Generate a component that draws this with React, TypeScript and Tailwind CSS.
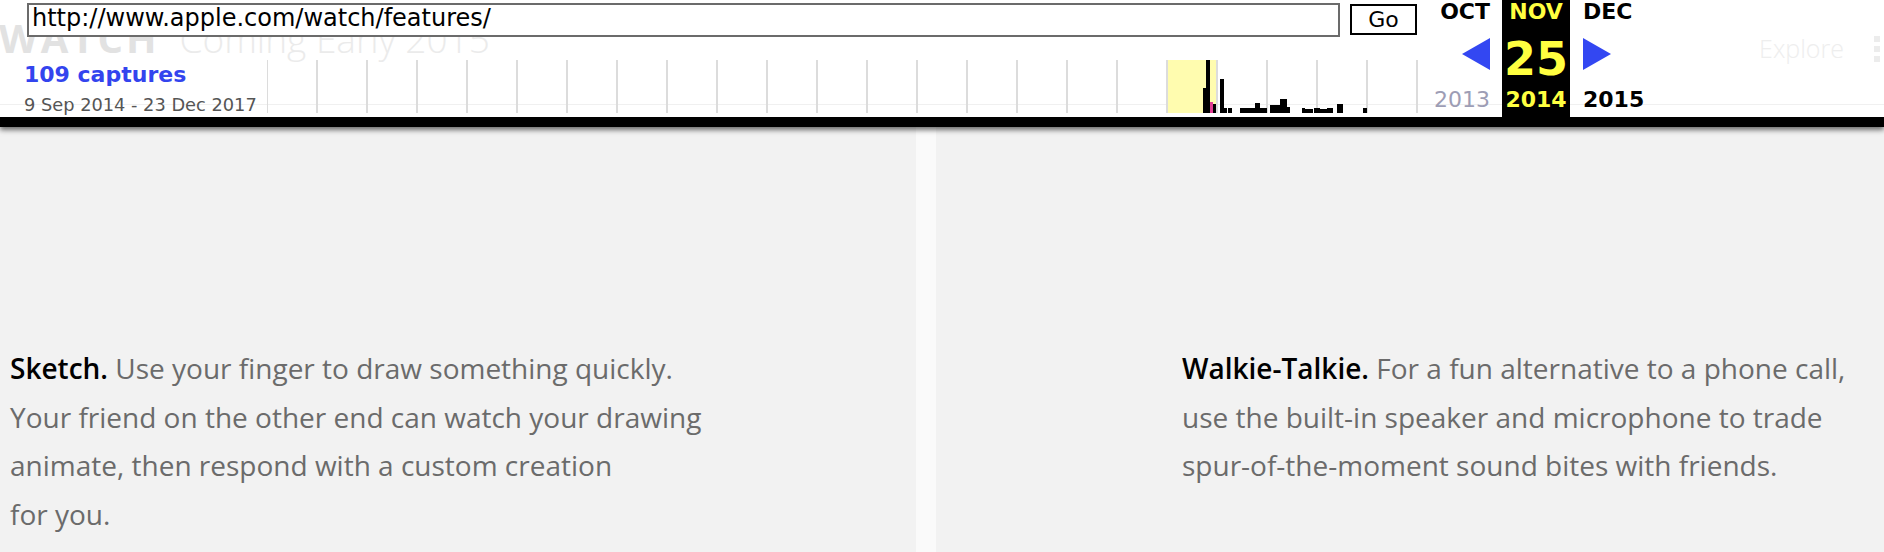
const ticks = Array.from({ length: 24 }, (_, i) => 267 + i * 50);

// capture bars: [x, top, width], all sit on the baseline at y=113
const bars: [number, number, number][] = [
  [1203, 88, 3],
  [1206, 60, 4],
  [1213, 104, 3],
  [1220, 79, 4],
  [1224, 108, 3],
  [1228, 108, 4],
  [1240, 108, 15],
  [1255, 103, 5],
  [1260, 108, 7],
  [1270, 105, 10],
  [1280, 99, 7],
  [1287, 107, 3],
  [1302, 108, 3],
  [1305, 109, 8],
  [1314, 108, 6],
  [1320, 109, 7],
  [1327, 108, 6],
  [1337, 104, 6],
  [1363, 108, 4],
];

function Sparkline() {
  return (
    <svg width="1152" height="53" viewBox="267 60 1152 53" className="block">
      <rect x="1167" y="60" width="50" height="53" fill="#fffcaf" />
      {ticks.map((x) => (
        <rect key={x} x={x - 1} y="60" width="2" height="53" fill="#dcdcdc" />
      ))}
      {bars.map(([x, y, w]) => (
        <rect key={x} x={x} y={y} width={w} height={113 - y} fill="#000" />
      ))}
      <rect x="1210" y="102" width="3" height="11" fill="#e23d93" />
    </svg>
  );
}

function Toolbar() {
  return (
    <div className="relative z-10 h-[127px] border-b-[10px] border-black bg-white font-['DejaVu_Sans',sans-serif] shadow-[0_3px_5px_rgba(0,0,0,0.55)]">
      {/* the page underneath, showing faintly through */}
      <div className="pointer-events-none absolute inset-0 overflow-hidden font-['Open_Sans',sans-serif]">
        <div className="flex items-start">
          <div className="ml-[-1px] flex items-baseline gap-[20px] pt-[14px] leading-[48px]">
            <span className="text-[40px] font-bold tracking-[3px] text-[#e2e2e2]">WATCH</span>
            <span className="text-[37px] font-light text-[#ebebeb]">Coming Early 2015</span>
          </div>
          <div className="ml-auto flex items-start gap-[30px] pr-[4px]">
            <span className="pt-[33px] text-[25px] font-light leading-[30px] text-[#eeeeee]">Explore</span>
            <div className="flex flex-col gap-[4px] pt-[36px]">
              <div className="h-[6px] w-[6px] bg-[#ececec]" />
              <div className="h-[6px] w-[6px] bg-[#ececec]" />
              <div className="h-[6px] w-[6px] bg-[#ececec]" />
            </div>
          </div>
        </div>
        <div className="absolute left-0 right-0 top-[104px] h-px bg-[#f0f0f0]" />
      </div>

      <div className="relative flex h-full">
        <div className="flex w-[1425px] flex-col">
          <div className="flex items-start gap-[10px] pl-[27px] pt-[3px]">
            <div className="h-[34px] w-[1313px] border-2 border-[#6b6b6b] bg-white pl-[3px] text-[24px] leading-[26px] text-black">
              http://www.apple.com/watch/features/
            </div>
            <div className="mt-[1px] flex h-[31px] w-[67px] justify-center border-2 border-black bg-white pt-[2px] text-[22px] leading-[24px] text-black">
              Go
            </div>
          </div>
          <div className="mt-[23px] flex items-start">
            <div className="w-[267px] pl-[24px]">
              <div className="text-[22px] font-bold leading-[30px] text-[#3344ee]">109 captures</div>
              <div className="text-[17.8px] leading-[30px] text-[#555]">9 Sep 2014 - 23 Dec 2017</div>
            </div>
            <Sparkline />
          </div>
        </div>

        <div className="flex">
          <div className="flex w-[77px] flex-col items-end pr-[12px]">
            <div className="h-[36px] text-[22px] font-bold leading-[24px] text-black">OCT</div>
            <div className="h-[52px] pt-[2px]">
              <svg width="28" height="32" viewBox="0 0 28 32">
                <path d="M28 0 L0 16 L28 32 Z" fill="#3347f2" />
              </svg>
            </div>
            <div className="h-[29px] text-[22px] leading-[24px] text-[#9d9db5]">2013</div>
          </div>
          <div className="flex w-[68px] flex-col items-center bg-black">
            <div className="h-[36px] text-[22px] font-bold leading-[24px] text-[#ffff40]">NOV</div>
            <div className="h-[52px] text-[46px] font-bold leading-[46px] text-[#ffff40]">25</div>
            <div className="h-[29px] text-[22px] font-bold leading-[24px] text-[#ffff40]">2014</div>
          </div>
          <div className="flex flex-col items-start pl-[13px]">
            <div className="h-[36px] text-[22px] font-bold leading-[24px] text-black">DEC</div>
            <div className="h-[52px] pt-[2px]">
              <svg width="28" height="32" viewBox="0 0 28 32">
                <path d="M0 0 L28 16 L0 32 Z" fill="#3347f2" />
              </svg>
            </div>
            <div className="h-[29px] text-[22px] font-bold leading-[24px] text-black">2015</div>
          </div>
        </div>
      </div>
    </div>
  );
}

export default function App() {
  return (
    <div className="h-[552px] w-[1884px] overflow-hidden bg-[#f2f2f2]">
      <Toolbar />
      <div className="flex h-[425px] font-['Open_Sans',sans-serif] text-[28px] leading-[48.67px] text-[#6b6b6b]">
        <div className="w-[916px] pl-[10px] pt-[217px]">
          <p>
            <span className="font-semibold text-black">Sketch.</span> Use your finger to draw something quickly.
            <br />
            Your friend on the other end can watch your drawing
            <br />
            animate, then respond with a custom creation
            <br />
            for you.
          </p>
        </div>
        <div className="w-[20px] bg-[#fafafa]" />
        <div className="flex-1 pl-[246px] pt-[217px]">
          <p>
            <span className="font-semibold text-black">Walkie-Talkie.</span> For a fun alternative to a phone call,
            <br />
            use the built-in speaker and microphone to trade
            <br />
            spur-of-the-moment sound bites with friends.
          </p>
        </div>
      </div>
    </div>
  );
}
